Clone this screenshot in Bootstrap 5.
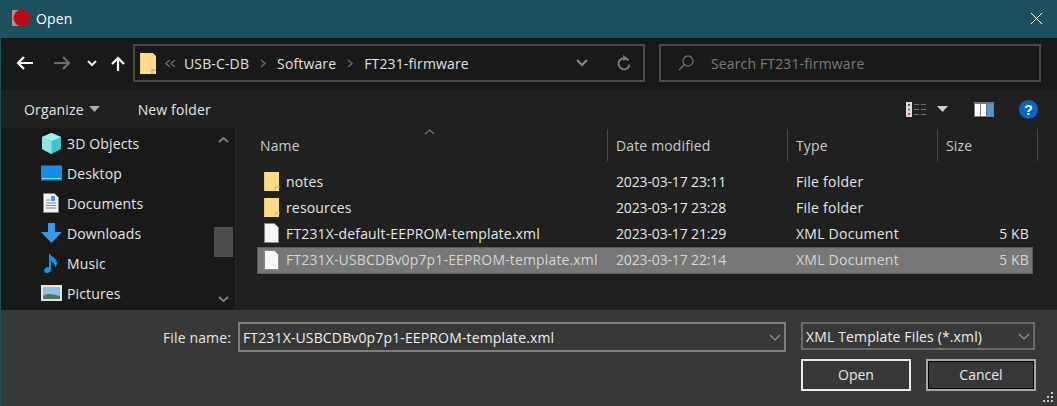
<!DOCTYPE html>
<html>
  <head>
    <title>Open</title>
    <link rel="stylesheet" href="https://cdn.jsdelivr.net/npm/bootstrap@5.3.3/dist/css/bootstrap.min.css" />
    <script src="https://cdn.jsdelivr.net/npm/bootstrap@5.3.3/dist/js/bootstrap.bundle.min.js"></script>
    <style>
      html, body { height: 100%; background: #191919; }
      body { font-family: "Open Sans", "Noto Sans", sans-serif; font-size: 14px; color: #e4e4e4; letter-spacing: 0.14px; overflow: hidden; }
      svg { display: block; flex: none; }
      .dlg { width: 1057px; height: 406px; border-left: 1px solid #1c505c; }
      .dlg-title { height: 38px; background: #1c505c; color: #fff; padding: 0 14px 2px 10px; }
      .dlg-title .logo { width: 20px; margin-right: 5px; }
      .addr-bar { height: 52px; background: #191919; padding: 6px 0 8px 15px; }
      .nav-btns { width: 117px; }
      .path-box { width: 512px; height: 38px; border: 2px solid #484848; padding: 0 12px 0 5px; flex: none; }
      .search-box { width: 382px; height: 38px; border: 2px solid #484848; margin-left: 14px; padding-left: 17px; color: #7a7a7a; flex: none; }
      .crumb { margin: 0 11px; color: #e0e0e0; }
      .crumb-lead { margin-right: -3px; }
      .cmd-bar { height: 38px; background: #202020; padding: 0 19px 0 23px; }
      .mid-area { height: 182px; }
      .side-tree { width: 235px; background: #191919; padding-top: 1px; border-right: 1px solid #262626; }
      .side-list { width: 212px; }
      .side-item { height: 30px; padding: 0 0 2px 39px; gap: 5px; }
      .side-item .ico { width: 22px; }
      .side-scroll { width: 20px; padding-top: 8px; }
      .side-thumb { height: 30px; width: 19px; background: #4d4d4d; margin-top: 84px; margin-bottom: 39px; }
      .file-pane { width: 821px; background: #202020; }
      .col-heads { height: 41px; padding-top: 1px; color: #c8c8c8; }
      .col-heads > div { height: 32px; border-right: 1px solid #4a4a4a; padding-left: 8px; }
      .cw-name { width: 372px; }
      .col-heads .cw-name { padding-left: 24px; }
      .cw-date { width: 180px; }
      .cw-type { width: 150px; }
      .cw-size { width: 100px; }
      .sort-up { position: absolute; left: 188px; top: 1px; }
      .file-row { height: 26px; width: 776px; margin-left: 21px; padding-bottom: 2px; }
      .file-row:last-child { background: #777; box-shadow: inset 0 0 0 1px #5c5c5c; color: #d4d4d4; height: 27px; }
      .file-row .cw-name { width: 351px; padding-left: 7px; gap: 5px; letter-spacing: 0.15px; }
      .file-row .cw-name .ico { width: 17px; }
      .file-row .cw-date { padding-left: 8px; letter-spacing: -0.15px; }
      .file-row .cw-type { padding-left: 8px; letter-spacing: 0.25px; }
      .file-row .cw-size { width: 95px; text-align: right; padding-right: 4px; }
      .dlg-foot { height: 96px; background: #383838; padding-top: 12px; }
      .lbl-name { width: 237px; padding-right: 7px; height: 30px; }
      .fake-input { width: 548px; height: 30px; border: 2px solid #7d7d7d; padding: 0 3px; color: #eee; }
      .fake-select { width: 234px; height: 28px; border: 2px solid #6a6a6a; margin-left: 15px; padding: 0 3px; color: #eee; }
      .foot-right { width: 235px; margin-left: 800px; margin-top: 7px; }
      .dlg-btn { width: 110px; height: 32px; border: 2px solid #e8e8e8; background: #383838; color: #e8e8e8; font-size: 14px; padding: 0 0 2px; border-radius: 0; }
      .dlg-btn.other { border-color: #a8a8a8; outline: 1px solid #000; outline-offset: -3px; }
      .grip { position: absolute; right: 3px; bottom: 3px; }
    </style>
  </head>

  <body>
    <div class="dlg d-flex flex-column position-relative">
      <header class="dlg-title d-flex align-items-center justify-content-between">
        <div class="d-flex align-items-center">
          <svg class="logo" width="20" height="20" viewBox="0 0 20 20"><rect x="1" y="2" width="10" height="16" fill="#b98a8a" /><circle cx="11" cy="10" r="8.5" fill="#b50f14" /></svg>
          <span>Open</span>
        </div>
        <svg width="13" height="13" viewBox="0 0 13 13"><path d="M1 1l11 11M12 1L1 12" stroke="#fff" stroke-width="1" /></svg>
      </header>

      <div class="addr-bar d-flex align-items-center">
        <div class="nav-btns d-flex align-items-center">
          <svg class="me-3" width="17" height="14" viewBox="0 0 17 14"><path d="M17 7H2M8 1L2 7l6 6" fill="none" stroke="#fff" stroke-width="2.2" /></svg>
          <svg style="margin-left:5px" width="17" height="14" viewBox="0 0 17 14"><path d="M0 7h15M9 1l6 6-6 6" fill="none" stroke="#6d6d6d" stroke-width="2.2" /></svg>
          <svg style="margin-left:16px" width="10" height="7" viewBox="0 0 10 7"><path d="M1 1l4 4 4-4" fill="none" stroke="#e8e8e8" stroke-width="2" /></svg>
          <svg style="margin-left:13px" width="16" height="15" viewBox="0 0 16 15"><path d="M8 15V2M2 8l6-6 6 6" fill="none" stroke="#fff" stroke-width="2.2" /></svg>
        </div>
        <div class="path-box d-flex align-items-center">
          <svg width="17" height="21" viewBox="0 0 17 21"><path d="M0 0h13l3 3v18H0z" fill="#fcdc86" /><path d="M12 21v-4h4" fill="none" stroke="#d9b049" stroke-width="1.5" /><path d="M0 0v21" stroke="#e6bd55" stroke-width="1" /></svg>
          <svg class="ms-2 crumb-lead" width="11" height="9" viewBox="0 0 11 9"><path d="M5 1L1 4.5 5 8M10 1L6 4.5 10 8" fill="none" stroke="#6d6d6d" stroke-width="1.3" /></svg>
          <span class="crumb">USB-C-DB</span>
          <svg width="6" height="9" viewBox="0 0 6 9"><path d="M1 1l4 3.5L1 8" fill="none" stroke="#6d6d6d" stroke-width="1.3" /></svg>
          <span class="crumb">Software</span>
          <svg width="6" height="9" viewBox="0 0 6 9"><path d="M1 1l4 3.5L1 8" fill="none" stroke="#6d6d6d" stroke-width="1.3" /></svg>
          <span class="crumb">FT231-firmware</span>
          <svg class="ms-auto" width="12" height="8" viewBox="0 0 12 8"><path d="M1 1l5 5 5-5" fill="none" stroke="#8a8a8a" stroke-width="2" /></svg>
          <svg style="margin-left:29px" width="14" height="16" viewBox="0 0 14 16"><path d="M11.5 5.5A5.5 5.5 0 1 0 12.5 9.5" fill="none" stroke="#777" stroke-width="2" /><path d="M6 0l5 3.5-5 2.5z" fill="#777" /></svg>
        </div>
        <div class="search-box d-flex align-items-center">
          <svg width="16" height="16" viewBox="0 0 16 16"><circle cx="10" cy="6" r="5" fill="none" stroke="#6a6a6a" stroke-width="1.3" /><path d="M6.5 9.5L1 15" stroke="#6a6a6a" stroke-width="1.5" /></svg>
          <span style="margin-left:17px">Search FT231-firmware</span>
        </div>
      </div>

      <div class="cmd-bar d-flex align-items-center">
        <span>Organize</span>
        <svg style="margin-left:5px" width="11" height="6" viewBox="0 0 11 6"><path d="M0 0h11L5.5 6z" fill="#aaa" /></svg>
        <span style="margin-left:38px">New folder</span>
        <svg class="ms-auto" width="20" height="15" viewBox="0 0 20 15"><rect width="6" height="15" fill="#ddd" /><rect x="2" y="2" width="2" height="2" fill="#555" /><rect x="2" y="6.5" width="2" height="2" fill="#3d7fd6" /><rect x="2" y="11" width="2" height="2" fill="#c44" /><path d="M8 2.5h5M15 2.5h5M8 7.5h5M15 7.5h5M8 12.5h5M15 12.5h5" stroke="#6e6e6e" stroke-width="1" /></svg>
        <svg style="margin-left:11px" width="11" height="6" viewBox="0 0 11 6"><path d="M0 0h11L5.5 6z" fill="#ccc" /></svg>
        <svg style="margin-left:26px" width="20" height="15" viewBox="0 0 20 15"><rect width="20" height="15" fill="#777" /><rect x="1" y="2" width="5" height="12" fill="#fff" /><rect x="7" y="2" width="5" height="12" fill="#fff" /><rect x="13" y="2" width="6" height="12" fill="#4b98e0" /></svg>
        <svg style="margin-left:25px" width="19" height="19" viewBox="0 0 19 19"><circle cx="9.5" cy="9.5" r="9.5" fill="#0a66c2" /><text x="9.5" y="14.5" text-anchor="middle" font-family="Liberation Sans" font-weight="700" font-size="14" fill="#fff">?</text></svg>
      </div>

      <div class="mid-area d-flex">
        <nav class="side-tree d-flex">
          <div class="side-list">
            <div class="side-item d-flex align-items-center"><span class="ico d-flex justify-content-center"><svg width="21" height="21" viewBox="0 0 21 21"><path d="M10.5 0L20 4v12l-9.5 5L1 16V4z" fill="#41c6d0" /><path d="M10.5 0L20 4l-9.5 4L1 4z" fill="#a6f0f2" /><path d="M1 4l9.5 4v13L1 16z" fill="#8fe3e4" /></svg></span>3D Objects</div>
            <div class="side-item d-flex align-items-center"><span class="ico d-flex justify-content-center"><svg width="21" height="16" viewBox="0 0 21 16"><rect width="21" height="15" y="0.5" fill="#148fe8" /><path d="M1 13.5h19" stroke="#8fd0ff" stroke-width="1" /></svg></span>Desktop</div>
            <div class="side-item d-flex align-items-center"><span class="ico d-flex justify-content-center"><svg width="16" height="20" viewBox="0 0 16 20"><path d="M.5.5h11l4 4v15H.5z" fill="#f1f1f1" stroke="#888" /><path d="M3 7h4M3 10h10M3 12.5h10M3 15h10" stroke="#6b8fb8" stroke-width="1" /><rect x="8" y="3" width="4" height="5" fill="#4b98e0" /></svg></span>Documents</div>
            <div class="side-item d-flex align-items-center"><span class="ico d-flex justify-content-center"><svg width="21" height="20" viewBox="0 0 21 20"><path d="M7 0h7v9h7L10.5 20 0 9h7z" fill="#3a96e6" /></svg></span>Downloads</div>
            <div class="side-item d-flex align-items-center"><span class="ico d-flex justify-content-center"><svg width="15" height="20" viewBox="0 0 15 20"><path d="M6 1c1 3 7 4 7 9 0 2-1 3-2 4 0-3-2-5-4-6v8c0 2-2 4-4 4s-3-1-3-2.5S2 14 4 14c.5 0 1 0 1 .3V1z" fill="#0f94f0" /></svg></span>Music</div>
            <div class="side-item d-flex align-items-center"><span class="ico d-flex justify-content-center"><svg width="21" height="16" viewBox="0 0 21 16"><rect width="21" height="16" fill="#e4e4e4" /><rect x="2" y="2" width="17" height="12" fill="#8fc0e6" /><path d="M2 11c4-3 9-2 17 0v3H2z" fill="#4d7a55" /></svg></span>Pictures</div>
          </div>
          <div class="side-scroll d-flex flex-column align-items-center">
            <svg width="11" height="6" viewBox="0 0 11 6"><path d="M1 5l4.5-4 4.5 4" fill="none" stroke="#7a7a7a" stroke-width="2" /></svg>
            <div class="side-thumb"></div>
            <svg width="11" height="6" viewBox="0 0 11 6"><path d="M1 1l4.5 4 4.5-4" fill="none" stroke="#7a7a7a" stroke-width="2" /></svg>
          </div>
        </nav>

        <section class="file-pane">
          <div class="col-heads d-flex position-relative">
            <div class="cw-name d-flex align-items-center">Name</div>
            <div class="cw-date d-flex align-items-center">Date modified</div>
            <div class="cw-type d-flex align-items-center">Type</div>
            <div class="cw-size d-flex align-items-center">Size</div>
            <svg class="sort-up" width="11" height="6" viewBox="0 0 11 6"><path d="M1 5l4.5-4 4.5 4" fill="none" stroke="#777" stroke-width="1.3" /></svg>
          </div>
          <div class="file-list">
            <div class="file-row d-flex align-items-center">
              <div class="cw-name d-flex align-items-center"><span class="ico"><svg width="16" height="20" viewBox="0 0 16 20"><path d="M0 1h15v19H0z" fill="#fcdc86" /><path d="M0 1v19" stroke="#e2b64e" /><path d="M11 20v-4h5" fill="none" stroke="#d9b049" /></svg></span>notes</div>
              <div class="cw-date">2023-03-17 23:11</div>
              <div class="cw-type">File folder</div>
              <div class="cw-size"></div>
            </div>
            <div class="file-row d-flex align-items-center">
              <div class="cw-name d-flex align-items-center"><span class="ico"><svg width="16" height="20" viewBox="0 0 16 20"><path d="M0 1h15v19H0z" fill="#fcdc86" /><path d="M0 1v19" stroke="#e2b64e" /><path d="M11 20v-4h5" fill="none" stroke="#d9b049" /></svg></span>resources</div>
              <div class="cw-date">2023-03-17 23:28</div>
              <div class="cw-type">File folder</div>
              <div class="cw-size"></div>
            </div>
            <div class="file-row d-flex align-items-center">
              <div class="cw-name d-flex align-items-center"><span class="ico"><svg width="15" height="20" viewBox="0 0 15 20"><path d="M.5.5h10l4 4v15H.5z" fill="#f7f7f7" stroke="#888" /></svg></span>FT231X-default-EEPROM-template.xml</div>
              <div class="cw-date">2023-03-17 21:29</div>
              <div class="cw-type">XML Document</div>
              <div class="cw-size">5 KB</div>
            </div>
            <div class="file-row d-flex align-items-center">
              <div class="cw-name d-flex align-items-center"><span class="ico"><svg width="15" height="20" viewBox="0 0 15 20"><path d="M.5.5h10l4 4v15H.5z" fill="#f7f7f7" stroke="#888" /></svg></span>FT231X-USBCDBv0p7p1-EEPROM-template.xml</div>
              <div class="cw-date">2023-03-17 22:14</div>
              <div class="cw-type">XML Document</div>
              <div class="cw-size">5 KB</div>
            </div>
          </div>
        </section>
      </div>

      <footer class="dlg-foot">
        <div class="d-flex">
          <label class="lbl-name d-flex align-items-center justify-content-end">File name:</label>
          <div class="fake-input d-flex align-items-center justify-content-between">
            <span>FT231X-USBCDBv0p7p1-EEPROM-template.xml</span>
            <svg width="12" height="7" viewBox="0 0 12 7"><path d="M1 1l5 5 5-5" fill="none" stroke="#999" stroke-width="1.2" /></svg>
          </div>
          <div class="fake-select d-flex align-items-center justify-content-between">
            <span>XML Template Files (*.xml)</span>
            <svg width="12" height="7" viewBox="0 0 12 7"><path d="M1 1l5 5 5-5" fill="none" stroke="#999" stroke-width="1.2" /></svg>
          </div>
        </div>
        <div class="d-flex justify-content-between foot-right">
          <button class="btn dlg-btn" type="button">Open</button>
          <button class="btn dlg-btn other" type="button">Cancel</button>
        </div>
      </footer>
      <svg class="grip" width="11" height="11" viewBox="0 0 11 11"><path d="M8 0h2v2H8zM4 4h2v2H4zM8 4h2v2H8zM0 8h2v2H0zM4 8h2v2H4zM8 8h2v2H8z" fill="#c8c8c8" /></svg>
    </div>
  </body>
</html>
